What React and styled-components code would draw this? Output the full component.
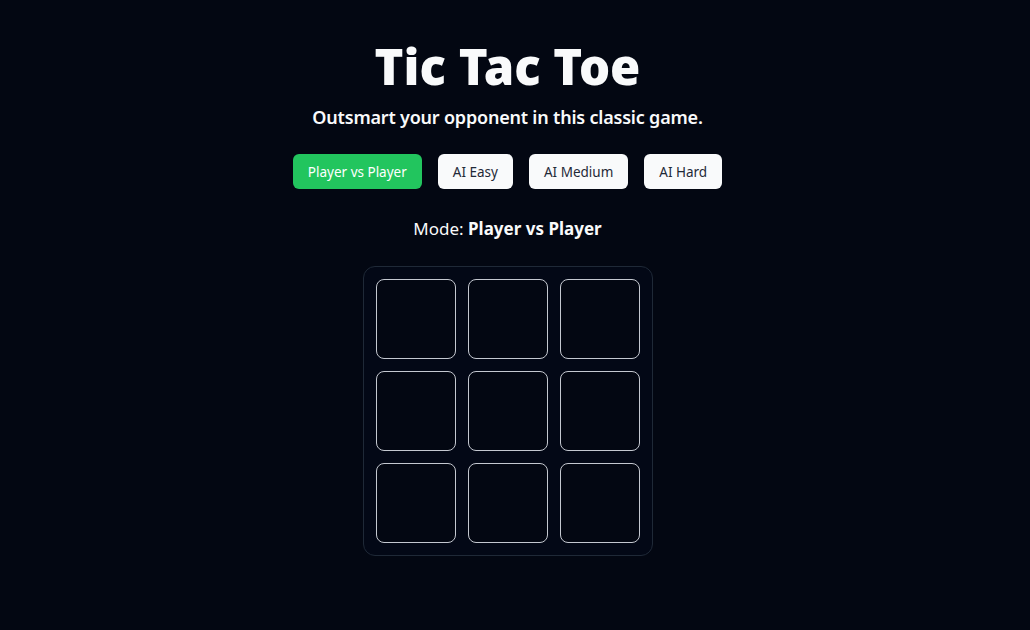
import React, { useState } from 'react'
import styled, { createGlobalStyle } from 'styled-components'

const GlobalStyle = createGlobalStyle`
  html, body {
    margin: 0;
    padding: 0;
    background: #030712;
    color: #f9fafb;
    font-family: "Noto Sans", "Open Sans", sans-serif;
  }
`

const MODES = ['Player vs Player', 'AI Easy', 'AI Medium', 'AI Hard']

const Page = styled.div`
  width: 1015px;
  min-height: 630px;
  display: flex;
  flex-direction: column;
  align-items: center;
  padding-top: 42px;
  box-sizing: border-box;
`

const Title = styled.h1`
  margin: 0;
  font-size: 49px;
  line-height: 48px;
  font-weight: 900;
`

const Subtitle = styled.p`
  margin: 13px 0 0;
  font-size: 18px;
  line-height: 28px;
  font-weight: 600;
  letter-spacing: -0.2px;
`

const ModeBar = styled.div`
  display: flex;
  gap: 16px;
  margin-top: 23px;
`

const ModeButton = styled.button`
  height: 35px;
  padding: 0 15px;
  border: none;
  border-radius: 6px;
  font-family: inherit;
  font-size: 13.5px;
  cursor: pointer;
  background: ${p => (p.$active ? '#22c55e' : '#f9fafb')};
  color: ${p => (p.$active ? '#ffffff' : '#1f2937')};
`

const ModeLabel = styled.p`
  margin: 26px 0 0;
  font-size: 17px;
  line-height: 28px;

  strong {
    font-weight: 700;
  }
`

const Board = styled.div`
  margin-top: 23px;
  display: grid;
  grid-template-columns: repeat(3, 80px);
  gap: 12px;
  padding: 12px;
  border: 1px solid #1f2937;
  border-radius: 12px;
  background: #030816;
`

const Cell = styled.button`
  width: 80px;
  height: 80px;
  border: 1px solid #c4c8d0;
  border-radius: 8px;
  background: #030712;
  color: #f9fafb;
  font-family: inherit;
  font-size: 40px;
  font-weight: 700;
  cursor: pointer;
  padding: 0;
`

export default function App() {
  const [mode, setMode] = useState(MODES[0])
  const [cells, setCells] = useState(Array(9).fill(null))
  const [xNext, setXNext] = useState(true)

  const play = i => {
    if (cells[i]) return
    const next = cells.slice()
    next[i] = xNext ? 'X' : 'O'
    setCells(next)
    setXNext(!xNext)
  }

  return (
    <Page>
      <GlobalStyle />
      <Title>Tic Tac Toe</Title>
      <Subtitle>Outsmart your opponent in this classic game.</Subtitle>
      <ModeBar>
        {MODES.map(m => (
          <ModeButton key={m} $active={m === mode} onClick={() => setMode(m)}>
            {m}
          </ModeButton>
        ))}
      </ModeBar>
      <ModeLabel>
        Mode: <strong>{mode}</strong>
      </ModeLabel>
      <Board>
        {cells.map((c, i) => (
          <Cell key={i} onClick={() => play(i)}>
            {c}
          </Cell>
        ))}
      </Board>
    </Page>
  )
}
